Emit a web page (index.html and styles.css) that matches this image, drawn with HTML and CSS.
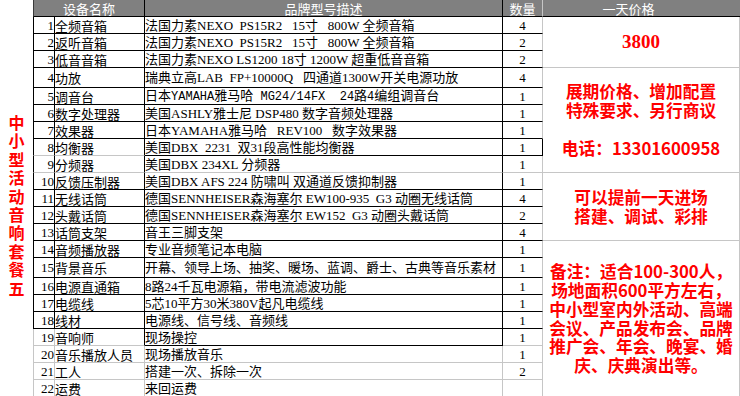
FILE: index.html
```html
<!DOCTYPE html>
<html lang="zh">
<head>
<meta charset="utf-8">
<title>中小型活动音响套餐五</title>
<link rel="stylesheet" href="styles.css">
</head>
<body>
<div class="sheet">
  <div class="label"><div class="label-text">中小型活动音响套餐五</div></div>
  <table class="grid">
    <colgroup><col class="c-idx"><col class="c-name"><col class="c-desc"><col class="c-qty"><col class="c-price"></colgroup>
    <thead>
      <tr class="hdr"><th colspan="2" class="h-name">设备名称</th><th class="h-desc">品牌型号描述</th><th class="h-qty">数量</th><th class="h-price">一天价格</th></tr>
    </thead>
    <tbody>
      <tr><td class="idx l r b">1</td><td class="name r b">全频音箱</td><td class="desc r b">法国力素NEXO  PS15R2   15寸   800W 全频音箱</td><td class="qty b">4</td>
        <td class="price" rowspan="3"><div class="p-num">3800</div></td></tr>
      <tr><td class="idx l r b">2</td><td class="name r b">返听音箱</td><td class="desc r b">法国力素NEXO  PS15R2   15寸   800W 全频音箱</td><td class="qty b">2</td></tr>
      <tr><td class="idx l r b">3</td><td class="name r b">低音音箱</td><td class="desc r b">法国力素NEXO LS1200 18寸 1200W 超重低音音箱</td><td class="qty b">2</td></tr>
      <tr class="tall"><td class="idx l r b">4</td><td class="name r b">功放</td><td class="desc r b">瑞典立高LAB  FP+10000Q   四通道1300W开关电源功放</td><td class="qty b">4</td>
        <td class="price" rowspan="6"><div class="p-text">展期价格、增加配置<br>特殊要求、另行商议<br><br>电话：13301600958</div></td></tr>
      <tr><td class="idx l r b">5</td><td class="name r b">调音台</td><td class="desc r b">日本<span class="mono">YAMAHA</span>雅马哈<span class="mono"> MG24/14FX  24</span>路<span class="mono">4</span>编组调音台</td><td class="qty b">1</td></tr>
      <tr><td class="idx l r b">6</td><td class="name r b">数字处理器</td><td class="desc r b">美国ASHLY雅士尼 DSP480 数字音频处理器</td><td class="qty b">1</td></tr>
      <tr><td class="idx l r b">7</td><td class="name r b">效果器</td><td class="desc r b">日本YAMAHA雅马哈   REV100   数字效果器</td><td class="qty b">1</td></tr>
      <tr><td class="idx l r">8</td><td class="name r">均衡器</td><td class="desc r b">美国DBX  2231  双31段高性能均衡器</td><td class="qty r b">1</td></tr>
      <tr><td class="idx l r">9</td><td class="name r">分频器</td><td class="desc r">美国DBX 234XL 分频器</td><td class="qty">1</td></tr>
      <tr><td class="idx l r b">10</td><td class="name r b">反馈压制器</td><td class="desc r b">美国DBX AFS 224 防啸叫 双通道反馈抑制器</td><td class="qty b">1</td>
        <td class="price" rowspan="4"><div class="p-text">可以提前一天进场<br>搭建、调试、彩排</div></td></tr>
      <tr><td class="idx l r b">11</td><td class="name r b">无线话筒</td><td class="desc r b">德国SENNHEISER森海塞尔 EW100-935  G3 动圈无线话筒</td><td class="qty b">4</td></tr>
      <tr><td class="idx l r b">12</td><td class="name r b">头戴话筒</td><td class="desc r b">德国SENNHEISER森海塞尔 EW152  G3 动圈头戴话筒</td><td class="qty b">2</td></tr>
      <tr><td class="idx l r b">13</td><td class="name r b">话筒支架</td><td class="desc r b">音王三脚支架</td><td class="qty b">4</td></tr>
      <tr><td class="idx l r b">14</td><td class="name r b">音频播放器</td><td class="desc r b">专业音频笔记本电脑</td><td class="qty b">1</td>
        <td class="price" rowspan="9"><div class="p-text">备注：适合100-300人，<br>场地面积600平方左右，<br>中小型室内外活动、高端<br>会议、产品发布会、品牌<br>推广会、年会、晚宴、婚<br>庆、庆典演出等。</div></td></tr>
      <tr class="tall"><td class="idx l r b">15</td><td class="name r b">背景音乐</td><td class="desc r b">开幕、领导上场、抽奖、暖场、蓝调、爵士、古典等音乐素材</td><td class="qty b">1</td></tr>
      <tr><td class="idx l r b">16</td><td class="name r b">电源直通箱</td><td class="desc r b">8路24千瓦电源箱，带电流滤波功能</td><td class="qty b">1</td></tr>
      <tr><td class="idx l r b">17</td><td class="name r b">电缆线</td><td class="desc r b">5芯10平方30米380V起凡电缆线</td><td class="qty b">1</td></tr>
      <tr><td class="idx l r b">18</td><td class="name r b">线材</td><td class="desc r b">电源线、信号线、音频线</td><td class="qty b">1</td></tr>
      <tr><td class="idx">19</td><td class="name r">音响师</td><td class="desc r b">现场操控</td><td class="qty">1</td></tr>
      <tr><td class="idx">20</td><td class="name">音乐播放人员</td><td class="desc">现场播放音乐</td><td class="qty">1</td></tr>
      <tr><td class="idx">21</td><td class="name">工人</td><td class="desc">搭建一次、拆除一次</td><td class="qty">2</td></tr>
      <tr><td class="idx">22</td><td class="name">运费</td><td class="desc">来回运费</td><td class="qty"></td></tr>
    </tbody>
  </table>
</div>
</body>
</html>
```

FILE: styles.css
```css
html, body {
  margin: 0;
  padding: 0;
  background: #ffffff;
}

body {
  width: 740px;
  height: 396px;
  overflow: hidden;
  font-family: "Liberation Serif", "Noto Sans CJK SC", serif;
  color: #000000;
}

.sheet {
  display: flex;
  align-items: flex-start;
}

.label {
  width: 33px;
  flex: none;
  display: flex;
  justify-content: center;
  padding-top: 115px;
}

.label-text {
  writing-mode: vertical-rl;
  text-orientation: upright;
  color: #ff0000;
  font-family: "Noto Sans CJK SC", sans-serif;
  font-weight: 700;
  font-size: 16px;
  line-height: 18px;
  letter-spacing: 2.4px;
}

.grid {
  border-collapse: separate;
  border-spacing: 0;
  table-layout: fixed;
  width: 707px;
  flex: none;
}

.c-idx { width: 22px; }
.c-name { width: 90px; }
.c-desc { width: 358px; }
.c-qty { width: 40px; }
.c-price { width: 197px; }

.grid th,
.grid td {
  padding: 0;
  overflow: hidden;
  white-space: pre;
  font-size: 13px;
  line-height: 13px;
  border-right: 1px solid #c6c6c6;
  border-bottom: 1px solid #c6c6c6;
}

.hdr {
  height: 17px;
}

.hdr th {
  background: #808080;
  color: #ffffff;
  font-family: "Noto Sans CJK SC", sans-serif;
  font-weight: 400;
  border-bottom-color: #000000;
  text-align: center;
}

.hdr .h-name {
  border-left: 1px solid #3a3a3a;
  border-right-color: #000000;
}

.hdr .h-desc {
  border-right-color: #000000;
}

.hdr .h-qty {
  border-right-color: #c6c6c6;
}

.hdr .h-price {
  border-right: 0;
  padding-right: 26px;
}

.grid tbody tr {
  height: 17px;
}

.grid tbody tr.tall {
  height: 20px;
}

.idx {
  text-align: right;
  padding-right: 1px;
  border-left: 1px solid #c6c6c6;
}

.name {
  padding-left: 2px;
  font-family: "Noto Sans CJK SC", sans-serif;
}

.desc {
  padding-left: 2px;
}

.qty {
  text-align: center;
}

.mono {
  font-family: "Liberation Mono", "Noto Sans CJK SC", monospace;
  font-size: 12px;
}

.grid td.l {
  border-left-color: #000000;
}

.grid td.r {
  border-right-color: #000000;
}

.grid td.b {
  border-bottom-color: #000000;
}

.price {
  border-right: 0;
  text-align: center;
  vertical-align: middle;
  color: #ff0000;
  font-weight: 700;
}

.p-num {
  font-family: "Liberation Serif", serif;
  font-size: 19px;
  line-height: 22px;
}

.p-text {
  font-family: "Noto Sans CJK SC", sans-serif;
  font-size: 16.7px;
  line-height: 18.8px;
}
```
